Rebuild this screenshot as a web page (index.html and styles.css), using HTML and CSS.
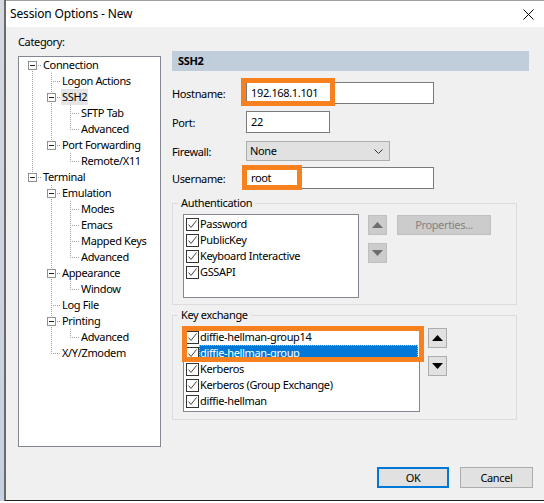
FILE: index.html
```html
<!DOCTYPE html>
<html>
<head>
<meta charset="utf-8">
<link rel="stylesheet" href="styles.css">
</head>
<body>
<div class="strip"></div>
<div class="window">
  <div class="titlebar">
    <span class="title">Session Options - New</span>
    <svg class="close" width="11" height="11" viewBox="0 0 11 11"><path d="M0.5 0.5 L10.5 10.5 M10.5 0.5 L0.5 10.5" stroke="#000" stroke-width="1"/></svg>
  </div>
  <div class="main">
    <div class="leftcol">
      <div class="cat">Category:</div>
      <div class="tree">
        <div class="row"><span class="c first"><i class="box"></i></span><span class="lbl">Connection</span></div>
        <div class="row"><span class="c line"></span><span class="c tee"></span><span class="lbl">Logon Actions</span></div>
        <div class="row"><span class="c line"></span><span class="c tee"><i class="box"></i></span><span class="lbl sel">SSH2</span></div>
        <div class="row"><span class="c line"></span><span class="c line"></span><span class="c tee"></span><span class="lbl">SFTP Tab</span></div>
        <div class="row"><span class="c line"></span><span class="c line"></span><span class="c ell"></span><span class="lbl">Advanced</span></div>
        <div class="row"><span class="c line"></span><span class="c ell"><i class="box"></i></span><span class="lbl">Port Forwarding</span></div>
        <div class="row"><span class="c line"></span><span class="c"></span><span class="c ell"></span><span class="lbl">Remote/X11</span></div>
        <div class="row"><span class="c ell"><i class="box"></i></span><span class="lbl">Terminal</span></div>
        <div class="row"><span class="c"></span><span class="c tee"><i class="box"></i></span><span class="lbl">Emulation</span></div>
        <div class="row"><span class="c"></span><span class="c line"></span><span class="c tee"></span><span class="lbl">Modes</span></div>
        <div class="row"><span class="c"></span><span class="c line"></span><span class="c tee"></span><span class="lbl">Emacs</span></div>
        <div class="row"><span class="c"></span><span class="c line"></span><span class="c tee"></span><span class="lbl">Mapped Keys</span></div>
        <div class="row"><span class="c"></span><span class="c line"></span><span class="c ell"></span><span class="lbl">Advanced</span></div>
        <div class="row"><span class="c"></span><span class="c tee"><i class="box"></i></span><span class="lbl">Appearance</span></div>
        <div class="row"><span class="c"></span><span class="c line"></span><span class="c ell"></span><span class="lbl">Window</span></div>
        <div class="row"><span class="c"></span><span class="c tee"></span><span class="lbl">Log File</span></div>
        <div class="row"><span class="c"></span><span class="c tee"><i class="box"></i></span><span class="lbl">Printing</span></div>
        <div class="row"><span class="c"></span><span class="c line"></span><span class="c ell"></span><span class="lbl">Advanced</span></div>
        <div class="row"><span class="c"></span><span class="c ell"></span><span class="lbl">X/Y/Zmodem</span></div>
      </div>
    </div>
    <div class="rightcol">
      <div class="header">SSH2</div>
      <div class="frow r-host">
        <span class="flabel">Hostname:</span>
        <div class="input wide">192.168.1.101</div>
        <div class="hl hl-host"></div>
      </div>
      <div class="frow r-port">
        <span class="flabel">Port:</span>
        <div class="input narrow">22</div>
      </div>
      <div class="frow r-fw">
        <span class="flabel">Firewall:</span>
        <div class="select">None<svg class="chev" width="9" height="5" viewBox="0 0 9 5"><path d="M0.5 0.5 L4.5 4.5 L8.5 0.5" fill="none" stroke="#333" stroke-width="1"/></svg></div>
      </div>
      <div class="frow r-user">
        <span class="flabel">Username:</span>
        <div class="input wide">root</div>
        <div class="hl hl-user"></div>
      </div>

      <fieldset class="group g-auth">
        <legend>Authentication</legend>
        <div class="gbody">
          <div class="list auth-list">
            <div class="item"><span class="cb"><svg width="11" height="11" viewBox="0 0 11 11"><path d="M1.5 5.5 L4 8.5 L9.5 1.5" fill="none" stroke="#444" stroke-width="1"/></svg></span><span class="itx">Password</span></div>
            <div class="item"><span class="cb"><svg width="11" height="11" viewBox="0 0 11 11"><path d="M1.5 5.5 L4 8.5 L9.5 1.5" fill="none" stroke="#444" stroke-width="1"/></svg></span><span class="itx">PublicKey</span></div>
            <div class="item"><span class="cb"><svg width="11" height="11" viewBox="0 0 11 11"><path d="M1.5 5.5 L4 8.5 L9.5 1.5" fill="none" stroke="#444" stroke-width="1"/></svg></span><span class="itx">Keyboard Interactive</span></div>
            <div class="item"><span class="cb"><svg width="11" height="11" viewBox="0 0 11 11"><path d="M1.5 5.5 L4 8.5 L9.5 1.5" fill="none" stroke="#444" stroke-width="1"/></svg></span><span class="itx">GSSAPI</span></div>
          </div>
          <div class="arrows">
            <div class="abtn dis"><svg width="11" height="6" viewBox="0 0 11 6"><path d="M0 6 L5.5 0 L11 6 Z" fill="#6e6e6e"/></svg></div>
            <div class="abtn dis"><svg width="11" height="6" viewBox="0 0 11 6"><path d="M0 0 L5.5 6 L11 0 Z" fill="#6e6e6e"/></svg></div>
          </div>
          <div class="props">Properties...</div>
        </div>
      </fieldset>

      <fieldset class="group g-kex">
        <legend>Key exchange</legend>
        <div class="gbody">
          <div class="list kex-list">
            <div class="item"><span class="cb"><svg width="11" height="11" viewBox="0 0 11 11"><path d="M1.5 5.5 L4 8.5 L9.5 1.5" fill="none" stroke="#444" stroke-width="1"/></svg></span><span class="itx">diffie-hellman-group14</span></div>
            <div class="item"><span class="cb"><svg width="11" height="11" viewBox="0 0 11 11"><path d="M1.5 5.5 L4 8.5 L9.5 1.5" fill="none" stroke="#444" stroke-width="1"/></svg></span><span class="itx selrow">diffie-hellman-group</span></div>
            <div class="item"><span class="cb"><svg width="11" height="11" viewBox="0 0 11 11"><path d="M1.5 5.5 L4 8.5 L9.5 1.5" fill="none" stroke="#444" stroke-width="1"/></svg></span><span class="itx">Kerberos</span></div>
            <div class="item"><span class="cb"><svg width="11" height="11" viewBox="0 0 11 11"><path d="M1.5 5.5 L4 8.5 L9.5 1.5" fill="none" stroke="#444" stroke-width="1"/></svg></span><span class="itx">Kerberos (Group Exchange)</span></div>
            <div class="item"><span class="cb"><svg width="11" height="11" viewBox="0 0 11 11"><path d="M1.5 5.5 L4 8.5 L9.5 1.5" fill="none" stroke="#444" stroke-width="1"/></svg></span><span class="itx">diffie-hellman</span></div>
            <div class="hl hl-kex"></div>
          </div>
          <div class="arrows kex-arrows">
            <div class="abtn"><svg width="11" height="6" viewBox="0 0 11 6"><path d="M0 6 L5.5 0 L11 6 Z" fill="#000"/></svg></div>
            <div class="abtn"><svg width="11" height="6" viewBox="0 0 11 6"><path d="M0 0 L5.5 6 L11 0 Z" fill="#000"/></svg></div>
          </div>
        </div>
      </fieldset>
    </div>
  </div>
  <div class="footer">
    <div class="btn ok">OK</div>
    <div class="btn">Cancel</div>
  </div>
</div>
</body>
</html>
```

FILE: styles.css
```css
html, body {
  margin: 0;
  padding: 0;
  background: #ffffff;
}
body {
  display: flex;
  width: 544px;
  height: 503px;
  overflow: hidden;
  font-family: "Noto Sans", "Open Sans", sans-serif;
  font-size: 11px;
  letter-spacing: -0.35px;
  font-variant-ligatures: none;
  color: #000;
}
.strip {
  width: 4px;
  height: 501px;
  background: linear-gradient(#d6dae0, #c6d1e1);
  flex: none;
}
.window {
  flex: none;
  width: 538px;
  height: 500px;
  border-left: 2px solid #6a6a6a;
  border-bottom: 1px solid #222;
  background: #f0f0f0;
  display: flex;
  flex-direction: column;
}
.titlebar {
  height: 26px;
  border-top: 1px solid #a0a0a0;
  background: #fff;
  display: flex;
  align-items: center;
  justify-content: space-between;
  padding: 0 10px 0 4px;
  flex: none;
}
.title {
  font-size: 12px;
  letter-spacing: -0.15px;
  line-height: 16px;
}
.close {
  display: block;
}
.main {
  display: flex;
  padding-left: 12px;
  flex: none;
}
.leftcol {
  width: 143px;
  padding-top: 7px;
}
.cat {
  line-height: 16px;
  height: 16px;
  margin-bottom: 6px;
}
.tree {
  box-sizing: border-box;
  width: 143px;
  height: 391px;
  border: 1px solid #828790;
  background: #fff;
  padding-left: 4px;
}
.row {
  display: flex;
  height: 16px;
  line-height: 16px;
  white-space: nowrap;
}
.c {
  display: block;
  width: 19px;
  height: 16px;
  flex: none;
}
.line {
  background: repeating-linear-gradient(#a0a0a0 0 1px, transparent 1px 2px) 9px 0 / 1px 16px no-repeat;
}
.tee {
  background:
    repeating-linear-gradient(#a0a0a0 0 1px, transparent 1px 2px) 9px 0 / 1px 16px no-repeat,
    repeating-linear-gradient(90deg, #a0a0a0 0 1px, transparent 1px 2px) 11px 8px / 8px 1px no-repeat;
}
.ell {
  background:
    repeating-linear-gradient(#a0a0a0 0 1px, transparent 1px 2px) 9px 0 / 1px 9px no-repeat,
    repeating-linear-gradient(90deg, #a0a0a0 0 1px, transparent 1px 2px) 11px 8px / 8px 1px no-repeat;
}
.first {
  background:
    repeating-linear-gradient(#a0a0a0 0 1px, transparent 1px 2px) 9px 8px / 1px 8px no-repeat,
    repeating-linear-gradient(90deg, #a0a0a0 0 1px, transparent 1px 2px) 11px 8px / 8px 1px no-repeat;
}
.box {
  display: block;
  box-sizing: border-box;
  width: 9px;
  height: 9px;
  margin: 4px 0 0 5px;
  border: 1px solid #919191;
  background: linear-gradient(#222, #222) center / 5px 1px no-repeat, #fff;
}
.lbl {
  padding: 0 1px;
  height: 16px;
}
.lbl.sel {
  background: #e5e5e5;
}
.rightcol {
  width: 357px;
  margin-left: 11px;
}
.header {
  margin-top: 24px;
  height: 20px;
  line-height: 20px;
  background: #c0cddb;
  font-weight: bold;
  padding-left: 6px;
}
.frow {
  position: relative;
  display: flex;
  align-items: center;
}
.flabel {
  width: 74px;
  flex: none;
}
.r-host { margin-top: 11px; }
.r-port { margin-top: 7px; }
.r-fw { margin-top: 8px; }
.r-user { margin-top: 6px; }
.input {
  box-sizing: border-box;
  height: 22px;
  line-height: 20px;
  border: 1px solid #7a7a7a;
  background: #fff;
  padding-left: 4px;
}
.wide { width: 188px; }
.narrow { width: 84px; }
.select {
  box-sizing: border-box;
  width: 144px;
  height: 20px;
  line-height: 18px;
  border: 1px solid #adadad;
  background: #e1e1e1;
  padding: 0 6px 0 3px;
  display: flex;
  align-items: center;
  justify-content: space-between;
}
.chev { display: block; }
.hl {
  position: absolute;
  box-sizing: border-box;
  border: 5px solid #f7811f;
}
.hl-host { left: 69px; top: -4px; width: 94px; height: 28px; }
.hl-user { left: 70px; top: -2px; width: 60px; height: 25px; }
.group {
  box-sizing: border-box;
  width: 345px;
  min-width: 0;
  margin: 0;
  border: 1px solid #dcdcdc;
  padding: 0 0 6px 5px;
}
.group legend {
  padding: 0 3px;
  line-height: 16px;
  height: 16px;
}
.g-auth { margin-top: 6px; }
.g-kex { margin-top: 2px; padding-bottom: 7px; }
.gbody {
  display: flex;
  align-items: flex-start;
  padding-top: 3px;
  padding-left: 5px;
}
.list {
  box-sizing: border-box;
  border: 1px solid #828790;
  background: #fff;
  padding: 1px 1px 0 2px;
  position: relative;
}
.auth-list { width: 176px; height: 84px; }
.kex-list { width: 237px; height: 86px; padding-top: 2px; }
.item {
  display: flex;
  align-items: center;
  height: 16px;
  line-height: 16px;
  white-space: nowrap;
}
.cb {
  box-sizing: border-box;
  width: 13px;
  height: 13px;
  border: 1px solid #333;
  background: #fff;
  flex: none;
  display: block;
}
.cb svg { display: block; }
.itx {
  padding-left: 1px;
  height: 16px;
}
.selrow {
  flex: 1;
  background: #0078d7;
  color: #fff;
  box-sizing: border-box;
  outline: 1px dotted #8fc4ef;
  outline-offset: -1px;
}
.hl-kex { left: -2px; top: -1px; width: 242px; height: 36px; }
.arrows {
  margin-left: 9px;
  margin-top: 1px;
  display: flex;
  flex-direction: column;
  gap: 8px;
}
.kex-arrows { margin-left: 8px; margin-top: 2px; }
.abtn {
  box-sizing: border-box;
  width: 19px;
  height: 20px;
  background: #e1e1e1;
  border: 1px solid #adadad;
  display: flex;
  align-items: center;
  justify-content: center;
}
.abtn.dis {
  background: #cccccc;
  border-color: #bfbfbf;
}
.abtn svg { display: block; }
.props {
  box-sizing: border-box;
  margin-left: 10px;
  margin-top: 1px;
  width: 94px;
  height: 20px;
  line-height: 18px;
  text-align: center;
  background: #cccccc;
  border: 1px solid #bfbfbf;
  color: #838383;
}
.footer {
  display: flex;
  justify-content: flex-end;
  gap: 11px;
  padding-right: 11px;
  margin-top: 20px;
}
.btn {
  box-sizing: border-box;
  width: 73px;
  height: 21px;
  line-height: 19px;
  text-align: center;
  background: #e1e1e1;
  border: 1px solid #adadad;
}
.btn.ok {
  width: 72px;
  border: 2px solid #0078d7;
  line-height: 17px;
}
```
